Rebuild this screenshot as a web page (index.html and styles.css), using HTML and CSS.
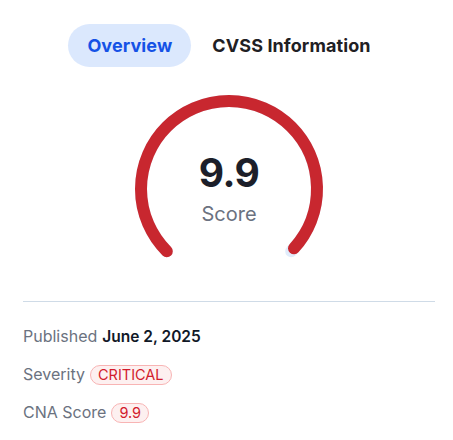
FILE: index.html
```html
<!DOCTYPE html>
<html>
<head>
<meta charset="utf-8">
<link rel="stylesheet" href="styles.css">
</head>
<body>
<div class="card">
  <div class="tabs">
    <div class="tab active">Overview</div>
    <div class="tab">CVSS Information</div>
  </div>
  <div class="gauge">
    <svg class="gauge-svg" width="200" height="180" viewBox="0 0 200 180">
      <path d="M37.8 162.2 A88 88 0 1 1 162.2 162.2" fill="none" stroke="#e1ecfb" stroke-width="12" stroke-linecap="round"/>
      <path d="M37.8 162.2 A88 88 0 1 1 162.2 162.2" fill="none" stroke="#c8272f" stroke-width="12" stroke-linecap="round" pathLength="100" stroke-dasharray="99 100"/>
    </svg>
    <div class="gauge-text">
      <div class="score">9.9</div>
      <div class="score-label">Score</div>
    </div>
  </div>
  <div class="divider"></div>
  <div class="rows">
    <div class="row"><span class="label">Published</span> <span class="value">June 2, 2025</span></div>
    <div class="row"><span class="label">Severity</span> <span class="badge">CRITICAL</span></div>
    <div class="row"><span class="label">CNA Score</span> <span class="badge">9.9</span></div>
  </div>
</div>
</body>
</html>
```
FILE: styles.css
```css
html, body {
  margin: 0;
  padding: 0;
  background: #ffffff;
}
body {
  font-family: Inter, "Noto Sans", sans-serif;
  color: #111827;
}
.card {
  padding: 24px 18px 0 23px;
}
.tabs {
  display: flex;
  justify-content: center;
  gap: 2px;
}
.tab {
  height: 43px;
  padding: 0 19px;
  border-radius: 22px;
  display: flex;
  align-items: center;
  font-size: 18px;
  font-weight: 700;
  letter-spacing: 0.1px;
  color: #1f2024;
}
.tab.active {
  background: #dbe8fd;
  color: #1552e6;
}
.gauge {
  position: relative;
  width: 200px;
  height: 170px;
  margin: 22px auto 0;
}
.gauge-svg {
  display: block;
}
.gauge-text {
  position: absolute;
  left: 0;
  right: 0;
  top: 62px;
  text-align: center;
}
.score {
  font-size: 39px;
  font-weight: 700;
  line-height: 44px;
  color: #1c1f2a;
  letter-spacing: -0.5px;
}
.score-label {
  font-size: 20px;
  line-height: 26px;
  color: #6b7280;
  margin-top: 6px;
}
.divider {
  margin-top: 42px;
  height: 1px;
  background: #cfdbe7;
}
.rows {
  padding-top: 24px;
  display: flex;
  flex-direction: column;
  gap: 17px;
}
.row {
  font-size: 16px;
  line-height: 21px;
  color: #6b7280;
  display: flex;
  align-items: center;
  gap: 5px;
}
.value {
  color: #111827;
  font-weight: 600;
  font-size: 15.5px;
}
.badge {
  border: 1px solid #f8b4b4;
  background: #fdf0f0;
  color: #d21c2c;
  border-radius: 10px;
  padding: 0 7px;
  font-size: 14.5px;
  line-height: 18px;
}
```
